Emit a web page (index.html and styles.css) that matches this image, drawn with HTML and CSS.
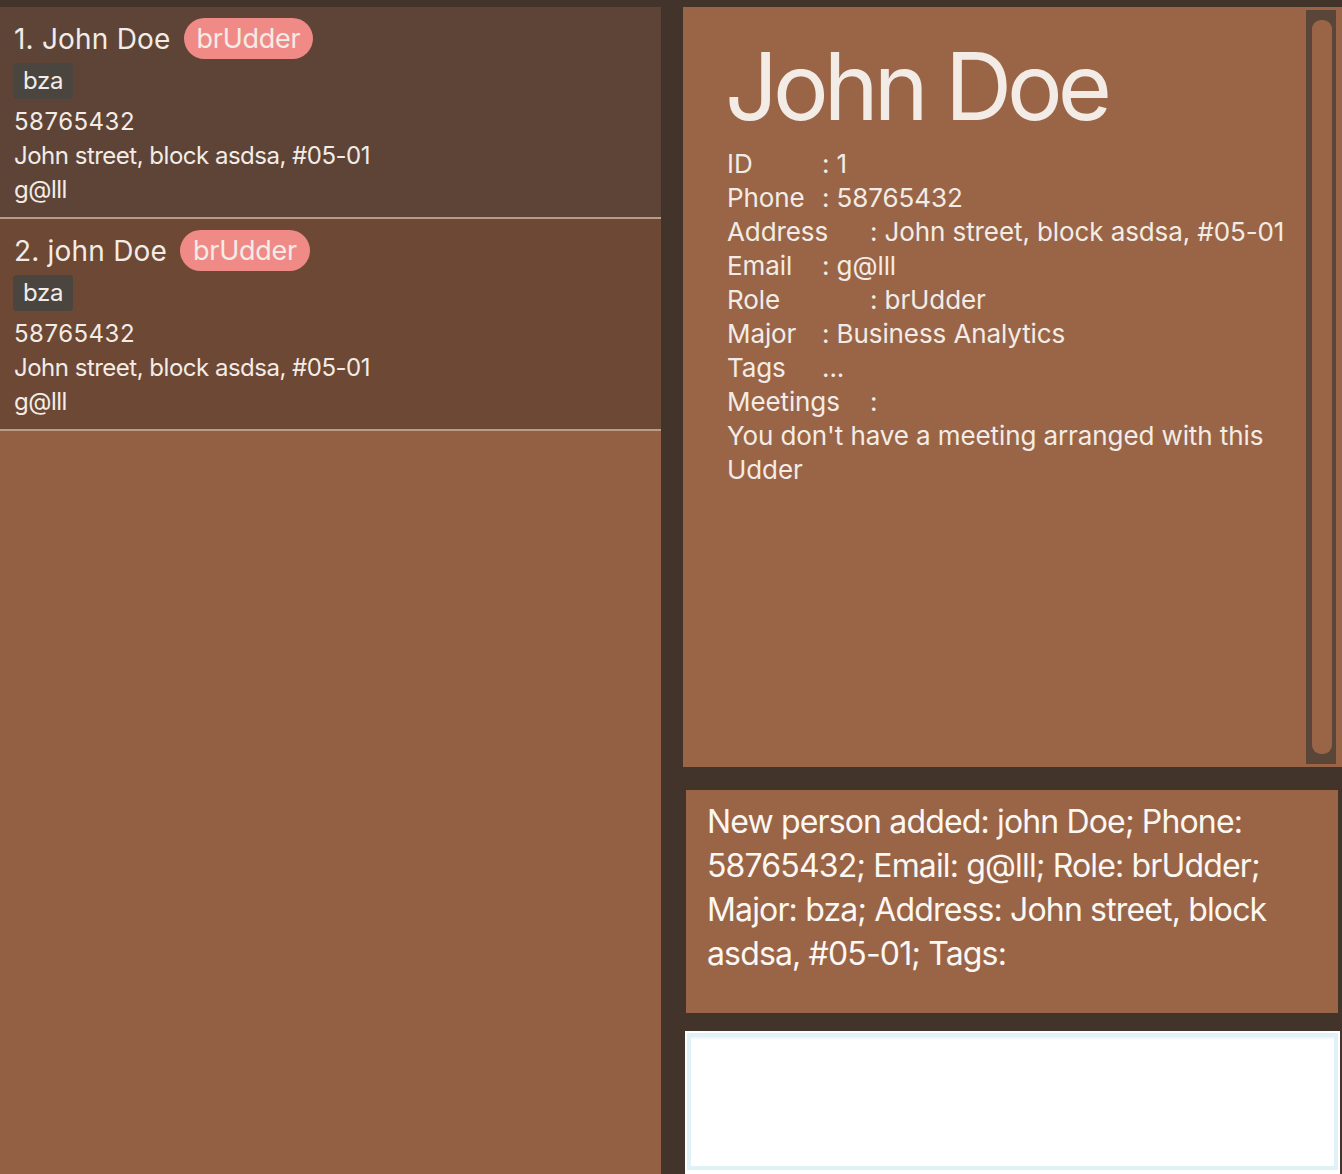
FILE: index.html
```html
<!DOCTYPE html>
<html>
<head>
<meta charset="utf-8">
<link rel="stylesheet" href="styles.css">
</head>
<body>
<div class="app">
  <div class="list">
    <div class="card card-a">
      <div class="name-row">
        <span class="name">1. John Doe</span>
        <span class="role">brUdder</span>
      </div>
      <div class="tags"><span class="tag">bza</span></div>
      <div class="line num">58765432</div>
      <div class="line">John street, block asdsa, #05-01</div>
      <div class="line">g@lll</div>
    </div>
    <div class="card card-b">
      <div class="name-row">
        <span class="name">2. john Doe</span>
        <span class="role">brUdder</span>
      </div>
      <div class="tags"><span class="tag">bza</span></div>
      <div class="line num">58765432</div>
      <div class="line">John street, block asdsa, #05-01</div>
      <div class="line">g@lll</div>
    </div>
  </div>
  <div class="right">
    <div class="detail">
      <div class="detail-body">
        <div class="big-name">John Doe</div>
        <div class="row"><span class="lbl w2">ID</span><span>: 1</span></div>
        <div class="row"><span class="lbl w2">Phone</span><span>: 58765432</span></div>
        <div class="row"><span class="lbl w3">Address</span><span>: John street, block asdsa, #05-01</span></div>
        <div class="row"><span class="lbl w2">Email</span><span>: g@lll</span></div>
        <div class="row"><span class="lbl w3">Role</span><span>: brUdder</span></div>
        <div class="row"><span class="lbl w2">Major</span><span>: Business Analytics</span></div>
        <div class="row"><span class="lbl w2">Tags</span><span>...</span></div>
        <div class="row"><span class="lbl w3">Meetings</span><span>:</span></div>
        <div class="row wrap">You don't have a meeting arranged with this Udder</div>
      </div>
      <div class="scroll"><div class="thumb"></div></div>
    </div>
    <div class="result">New person added: john Doe; Phone: 58765432; Email: g@lll; Role: brUdder; Major: bza; Address: John street, block asdsa, #05-01; Tags:</div>
    <div class="command"><div class="command-inner"></div></div>
  </div>
</div>
</body>
</html>
```
FILE: styles.css
```css
* { box-sizing: border-box; }
html, body { margin: 0; padding: 0; }
body {
  background: #42342b;
  font-family: Inter, "Noto Sans", sans-serif;
  color: #f3ece6;
  width: 1342px;
  height: 1174px;
  overflow: hidden;
}
.app {
  display: flex;
  padding-top: 7px;
  height: 1174px;
}
.list {
  width: 661px;
  flex: none;
  background: #936043;
}
.card {
  padding: 11px 14px 10px 14px;
  border-bottom: 2px solid #b79c88;
  height: 212px;
}
.card-a { background: #5d4437; }
.card-b { background: #6c4835; }
.name-row {
  display: flex;
  align-items: center;
  gap: 13px;
  height: 41px;
}
.name {
  font-size: 28px;
  letter-spacing: 0.2px;
}
.role {
  background: #f08a86;
  border-radius: 21px;
  height: 41px;
  line-height: 41px;
  padding: 0 13px;
  font-size: 27px;
  letter-spacing: -0.3px;
}
.tags {
  margin-top: 4px;
  margin-left: -1px;
  height: 36px;
  display: flex;
}
.tag {
  background: #4b4540;
  border-radius: 4px;
  height: 36px;
  line-height: 36px;
  padding: 0 10px;
  font-size: 24px;
  letter-spacing: -0.3px;
}
.tags + .line { margin-top: 6px; }
.line {
  font-size: 24px;
  line-height: 34px;
  letter-spacing: -0.5px;
}
.line.num { letter-spacing: 0.5px; }
.right {
  flex: 1;
  display: flex;
  flex-direction: column;
  margin-left: 22px;
}
.detail {
  height: 760px;
  flex: none;
  background: #9a6547;
  display: flex;
  padding: 3px 6px 3px 0;
}
.detail-body {
  flex: 1;
  padding-left: 44px;
  padding-top: 29px;
}
.big-name {
  font-size: 93px;
  line-height: 94px;
  letter-spacing: -5px;
  margin-left: -2px;
  margin-bottom: 14px;
}
.row {
  font-size: 26px;
  line-height: 34px;
  letter-spacing: -0.1px;
  display: flex;
}
.lbl { flex: none; }
.w2 { width: 95px; }
.w3 { width: 143px; }
.wrap {
  display: block;
  width: 565px;
}
.scroll {
  width: 30px;
  flex: none;
  background: #5a4638;
  padding: 10px 4px 10px 6px;
}
.thumb {
  height: 100%;
  background: #9a6547;
  border-radius: 9px;
}
.result {
  margin: 23px 4px 0 3px;
  height: 223px;
  flex: none;
  background: #9a6547;
  padding: 10px 21px 9px 21px;
  font-size: 32px;
  line-height: 44px;
  letter-spacing: -0.85px;
  color: #fbf7f3;
}
.command {
  margin: 18px 2px 0 2px;
  flex: 1;
  background: #ffffff;
  padding: 2px 2px 4px 2px;
}
.command-inner {
  height: 100%;
  border: 4px solid #e0f1f8;
  box-shadow: inset 0 3px 3px -2px #eee;
}
```
